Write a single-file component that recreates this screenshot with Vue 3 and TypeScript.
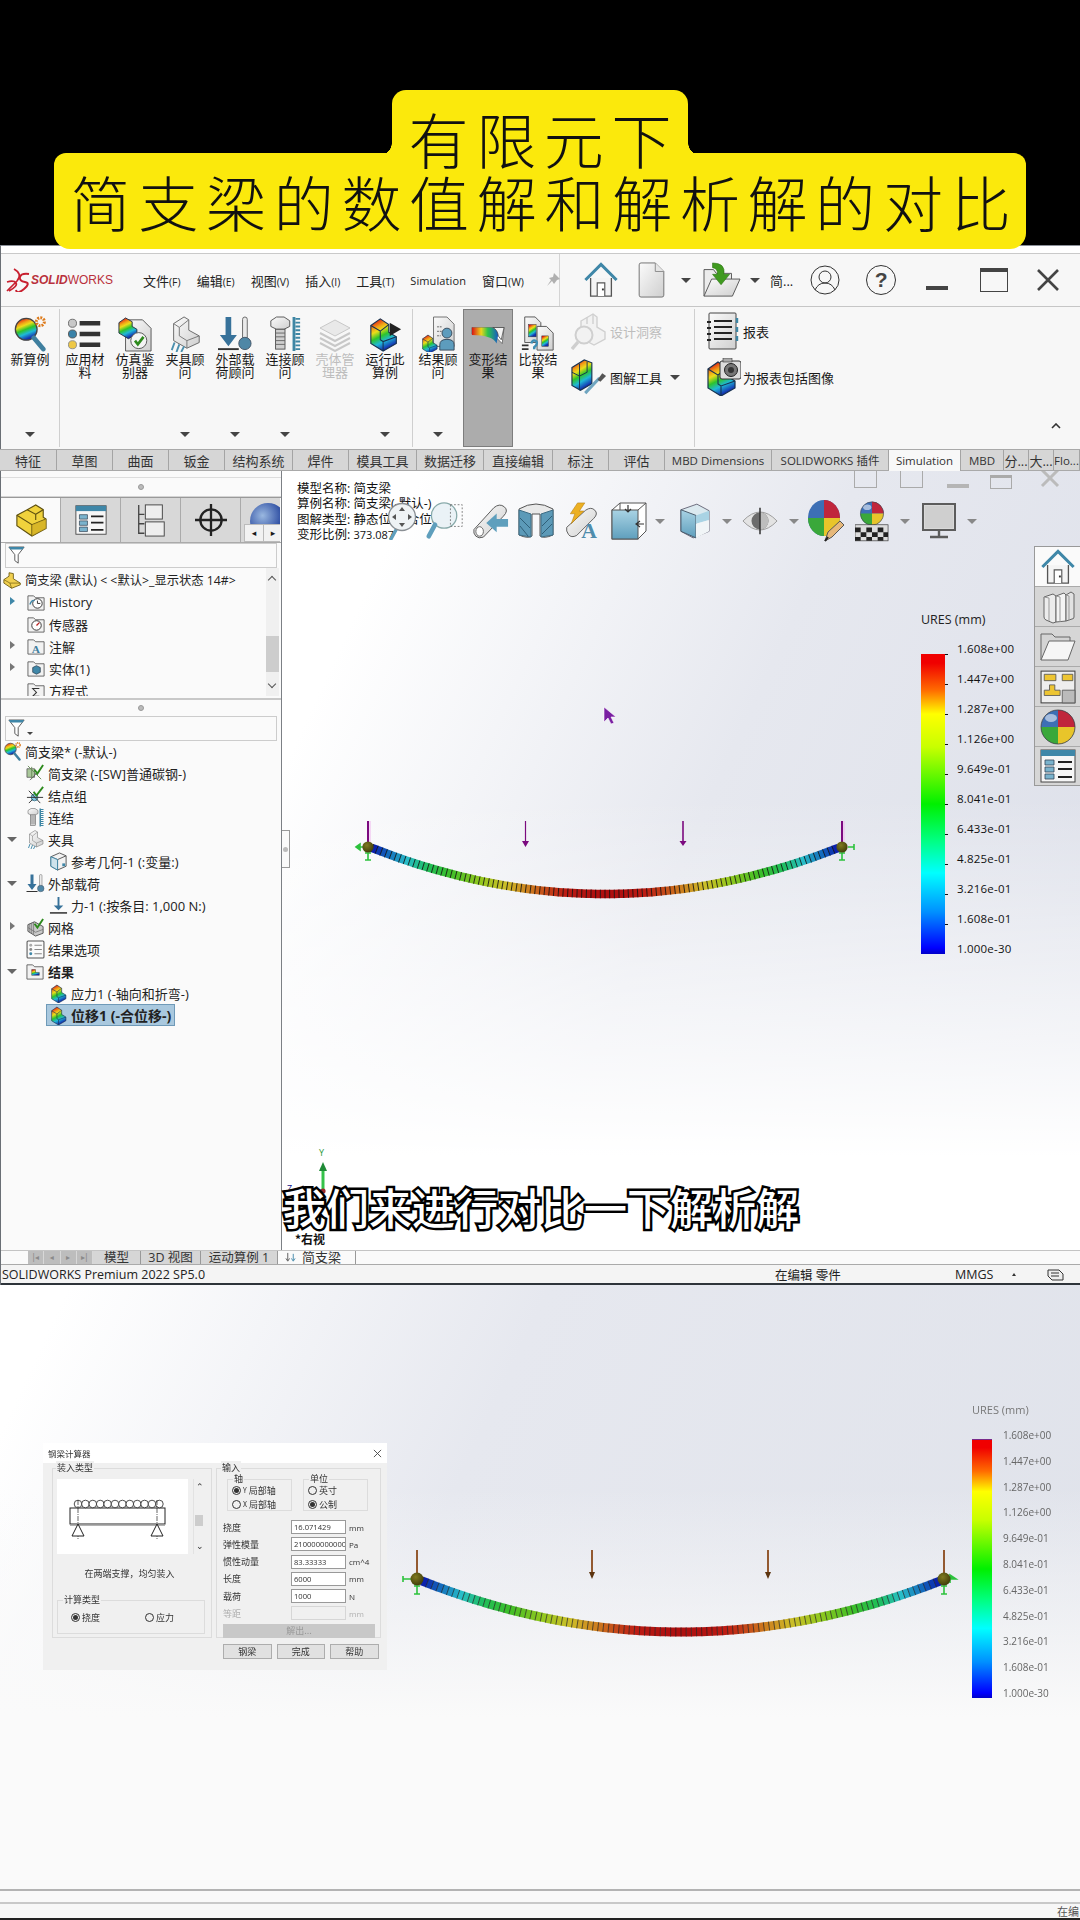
<script setup lang="ts">
interface Seg { x1: number; y1: number; x2: number; y2: number; c: string; tx1: number; ty1: number; tx2: number; ty2: number }

const stops: [number, number[]][] = [
  [0, [10, 20, 170]], [0.14, [20, 110, 190]], [0.28, [40, 190, 200]], [0.42, [30, 190, 90]],
  [0.56, [60, 190, 40]], [0.72, [150, 200, 30]], [0.82, [205, 190, 40]], [0.9, [205, 120, 30]], [0.97, [190, 30, 20]], [1, [175, 15, 15]],
]
function colour(f: number): string {
  for (let i = 1; i < stops.length; i++) {
    if (f <= stops[i][0]) {
      const [a, ca] = stops[i - 1]
      const [b, cb] = stops[i]
      const k = (f - a) / (b - a)
      return `rgb(${ca.map((v, j) => Math.round(v + (cb[j] - v) * k)).join(',')})`
    }
  }
  return 'rgb(175,15,15)'
}
function beam(x0: number, x1: number, yEnd: number, yMid: number, n: number, th: number): Seg[] {
  const out: Seg[] = []
  const px = (t: number) => x0 + (x1 - x0) * t
  const py = (t: number) => yEnd + (yMid - yEnd) * 4 * t * (1 - t)
  for (let i = 0; i < n; i++) {
    const a = i / n
    const b = (i + 1) / n
    const dx = px(b) - px(a)
    const dy = py(b) - py(a)
    const l = Math.hypot(dx, dy)
    const nx = -dy / l * th / 2
    const ny = dx / l * th / 2
    out.push({
      x1: px(a), y1: py(a), x2: px(b) + 0.3, y2: py(b), c: colour(4 * ((a + b) / 2) * (1 - (a + b) / 2)),
      tx1: px(a) - nx, ty1: py(a) - ny, tx2: px(a) + nx, ty2: py(a) + ny,
    })
  }
  return out
}
const beamA = beam(372, 838, 848, 894, 100, 8.5)
const beamB = beam(422, 940, 1581, 1632, 100, 9)

const menus = [['文件', '(F)'], ['编辑', '(E)'], ['视图', '(V)'], ['插入', '(I)'], ['工具', '(T)'], ['Simulation', ''], ['窗口', '(W)']]

interface Rb { id: string; lines: string[]; caret?: boolean; off?: boolean; on?: boolean }
const groups: { w: number; items: Rb[] }[] = [
  { w: 59, items: [{ id: 'r-new', lines: ['新算例'], caret: true }] },
  { w: 353, items: [
    { id: 'r-mat', lines: ['应用材', '料'] },
    { id: 'r-chk', lines: ['仿真鉴', '别器'] },
    { id: 'r-fix', lines: ['夹具顾', '问'], caret: true },
    { id: 'r-load', lines: ['外部载', '荷顾问'], caret: true },
    { id: 'r-bolt', lines: ['连接顾', '问'], caret: true },
    { id: 'r-shell', lines: ['壳体管', '理器'], off: true },
    { id: 'r-run', lines: ['运行此', '算例'], caret: true },
  ] },
]
const group3: Rb[] = [
  { id: 'r-adv', lines: ['结果顾', '问'], caret: true },
  { id: 'r-def', lines: ['变形结', '果'], on: true },
  { id: 'r-cmp', lines: ['比较结', '果'] },
]

const tabs: [string, number, boolean?][] = [
  ['特征', 57], ['草图', 56], ['曲面', 56], ['钣金', 56], ['结构系统', 68], ['焊件', 56], ['模具工具', 68], ['数据迁移', 67], ['直接编辑', 69],
  ['标注', 56], ['评估', 56], ['MBD Dimensions', 107], ['SOLIDWORKS 插件', 117], ['Simulation', 72, true], ['MBD', 43], ['分...', 25], ['大...', 25], ['Flo...', 26],
]
const isLatin = (s: string) => /[A-Za-z]/.test(s)

interface Row { lv: number; arrow?: 'r' | 'd' | 'b'; icon: string; text: string; bold?: boolean; sel?: boolean }
const tree1: Row[] = [
  { lv: 0, icon: 't-root', text: '简支梁 (默认) < <默认>_显示状态 14#>' },
  { lv: 1, arrow: 'b', icon: 't-hist', text: 'History' },
  { lv: 1, icon: 't-sens', text: '传感器' },
  { lv: 1, arrow: 'r', icon: 't-anno', text: '注解' },
  { lv: 1, arrow: 'r', icon: 't-body', text: '实体(1)' },
  { lv: 1, icon: 't-eq', text: '方程式' },
]
const tree2: Row[] = [
  { lv: 0, icon: 'r-new', text: '简支梁* (-默认-)' },
  { lv: 1, icon: 't-beam', text: '简支梁 (-[SW]普通碳钢-)' },
  { lv: 1, icon: 't-node', text: '结点组' },
  { lv: 1, icon: 'r-bolt', text: '连结' },
  { lv: 1, arrow: 'd', icon: 'r-fix', text: '夹具' },
  { lv: 2, icon: 't-cube', text: '参考几何-1 (:变量:)' },
  { lv: 1, arrow: 'd', icon: 'r-load', text: '外部载荷' },
  { lv: 2, icon: 't-force', text: '力-1 (:按条目: 1,000 N:)' },
  { lv: 1, arrow: 'r', icon: 't-mesh', text: '网格' },
  { lv: 1, icon: 't-opt', text: '结果选项' },
  { lv: 1, arrow: 'd', icon: 't-res', text: '结果', bold: true },
  { lv: 2, icon: 's-part', text: '应力1 (-轴向和折弯-)' },
  { lv: 2, icon: 's-part', text: '位移1 (-合位移-)', bold: true, sel: true },
]

const legend = ['1.608e+00', '1.447e+00', '1.287e+00', '1.126e+00', '9.649e-01', '8.041e-01', '6.433e-01', '4.825e-01', '3.216e-01', '1.608e-01', '1.000e-30']
const dlgRows: [string, string, string, boolean?][] = [
  ['挠度', '16.071429', 'mm'], ['弹性模量', '210000000000', 'Pa'], ['惯性动量', '83.33333', 'cm^4'],
  ['长度', '6000', 'mm'], ['载荷', '1000', 'N'], ['等距', '', 'mm', true],
]
const loops = Array.from({ length: 12 }, (_, i) => 23 + i * 7.4)
</script>

<template>
  <div class="screen">
    <svg class="defs" aria-hidden="true">
      <defs>
        <linearGradient id="rb" x1="0" y1="0" x2="0.4" y2="1">
          <stop offset=".1" stop-color="#e01515" /><stop offset=".3" stop-color="#f0a018" /><stop offset=".42" stop-color="#ecdc1a" /><stop offset=".6" stop-color="#2cc42c" /><stop offset=".78" stop-color="#1fb8d8" /><stop offset="1" stop-color="#1430b0" />
        </linearGradient>
        <linearGradient id="rh" x1="0" y1="0" x2="1" y2="0">
          <stop offset="0" stop-color="#d81414" /><stop offset=".35" stop-color="#ecd41c" /><stop offset=".6" stop-color="#2cc44c" /><stop offset="1" stop-color="#1858c8" />
        </linearGradient>
        <linearGradient id="gy" x1="0" y1="0" x2="1" y2="1">
          <stop offset="0" stop-color="#fbfbfb" /><stop offset="1" stop-color="#cfcfcf" />
        </linearGradient>
        <linearGradient id="bl" x1="0" y1="0" x2="0" y2="1">
          <stop offset="0" stop-color="#a9d3e4" /><stop offset="1" stop-color="#5f9fbd" />
        </linearGradient>
        <radialGradient id="ball" cx=".4" cy=".35" r=".7">
          <stop offset="0" stop-color="#7f7a20" /><stop offset="1" stop-color="#3d3a08" />
        </radialGradient>
        <symbol id="s-home" viewBox="0 0 36 38">
          <path d="M7 17V36H29V17" fill="#f4f4f4" stroke="#555" stroke-width="1.4" />
          <path d="M1.5 19 18 2.5 34.5 19" fill="none" stroke="#3f87a8" stroke-width="3.2" />
          <path d="M14 36V22H22V36" fill="#fff" stroke="#555" stroke-width="1.2" />
          <rect x="19" y="28" width="2" height="2" fill="#333" />
        </symbol>
        <symbol id="s-doc" viewBox="0 0 28 38">
          <path d="M1 3Q1 1 3 1H18L27 10V35Q27 37 25 37H3Q1 37 1 35Z" fill="url(#gy)" stroke="#6f6f6f" />
          <path d="M18 1V10H27" fill="#e6e6e6" stroke="#8a8a8a" />
        </symbol>
        <symbol id="s-open" viewBox="0 0 40 38">
          <path d="M1 36V8H11L14 12H30V18" fill="#ececec" stroke="#555" />
          <path d="M1 36 9 18H39L31 36Z" fill="url(#gy)" stroke="#555" />
          <path d="M10 1Q24 1 22 13H28L19 24 10 13H15Q16 7 10 6Z" fill="#3f9a1f" stroke="#2b7212" stroke-width=".6" />
        </symbol>
        <symbol id="s-part" viewBox="0 0 32 36">
          <polygon points="3,9 13,2 22,8 22,16 30,21 30,28 16,36 3,28" fill="url(#rb)" stroke="#173350" stroke-width="1.2" />
          <path d="M3 9 13 15V24L16 26 30 21M13 15 22 8M16 26V36" fill="none" stroke="#173350" stroke-width="1.1" />
        </symbol>
        <symbol id="s-sphere" viewBox="0 0 36 36">
          <circle cx="18" cy="18" r="17" fill="#3d6fb5" />
          <path d="M18 1A17 17 0 0 1 35 18H18Z" fill="#c0263c" />
          <path d="M1 18H18V35A17 17 0 0 1 1 18Z" fill="#3aa83a" />
          <path d="M18 18H35A17 17 0 0 1 18 35Z" fill="#e8c52a" />
          <ellipse cx="11" cy="9" rx="6" ry="4" fill="#fff" opacity=".55" />
          <circle cx="18" cy="18" r="17" fill="none" stroke="#444" stroke-width=".8" />
        </symbol>
        <symbol id="r-new" viewBox="0 0 36 38">
          <circle cx="14" cy="14" r="11.5" fill="url(#rb)" stroke="#444" stroke-width="1.4" />
          <path d="M22 23 32 35" stroke="#3f7f9f" stroke-width="5" stroke-linecap="round" />
          <circle cx="29" cy="6" r="4.2" fill="none" stroke="#dd7a1a" stroke-width="3.2" stroke-dasharray="2 1.2" />
        </symbol>
        <symbol id="r-mat" viewBox="0 0 38 36">
          <circle cx="5" cy="6" r="4.5" fill="#c8c8c8" stroke="#666" /><circle cx="5" cy="18" r="4.5" fill="#3a82a8" stroke="#555" /><circle cx="5" cy="30" r="4.5" fill="#eec846" stroke="#888" />
          <path d="M13 6H36M13 18H36M13 30H36" stroke="#333" stroke-width="5" />
        </symbol>
        <symbol id="r-chk" viewBox="0 0 36 38">
          <path d="M8 4H26L35 13V37H8Z" fill="url(#gy)" stroke="#555" />
          <polygon points="1,7 8,2 15,6 15,11 20,14 20,19 11,24 1,18" fill="url(#rb)" stroke="#234" />
          <circle cx="22" cy="26" r="8.5" fill="#f4f4f4" stroke="#555" />
          <path d="M18 26 21 30 27 22" fill="none" stroke="#2d8a1d" stroke-width="2.8" />
        </symbol>
        <symbol id="r-fix" viewBox="0 0 34 38">
          <path d="M5 8 16 1 21 4V15L32 21V28L19 34 5 26Z" fill="url(#gy)" stroke="#666" />
          <path d="M5 8 11 12V21L19 26 32 21M11 12 21 4M19 26V34" fill="none" stroke="#777" />
          <path d="M3 36 6 28M8 38 11 30M13 38 16 32" stroke="#4a8fae" stroke-width="2" />
        </symbol>
        <symbol id="r-load" viewBox="0 0 36 38">
          <path d="M8 1H14V20H20L11 32 2 20H8Z" fill="#37729a" />
          <rect x="0" y="34" width="22" height="2" fill="#333" />
          <rect x="26" y="1" width="5" height="24" rx="2.5" fill="#eaeaea" stroke="#666" />
          <circle cx="28.5" cy="29" r="6.5" fill="#4f87a6" stroke="#456" />
        </symbol>
        <symbol id="r-bolt" viewBox="0 0 36 38">
          <path d="M3 5 9 1H17L23 5V11L17 14H9L3 11Z" fill="url(#gy)" stroke="#555" />
          <rect x="8" y="14" width="10" height="21" fill="#cfcfcf" stroke="#555" />
          <path d="M8 18H18M8 22H18M8 26H18M8 30H18" stroke="#666" />
          <rect x="26" y="1" width="3" height="36" fill="#3e86a4" />
          <path d="M29 3H34M29 7H34M29 11H34M29 15H34M29 19H34M29 23H34M29 27H34M29 31H34M29 35H34" stroke="#3e86a4" stroke-width="2" />
        </symbol>
        <symbol id="r-shell" viewBox="0 0 34 36">
          <path d="M2 12 17 4 32 12 17 20Z" fill="#e9e9e9" stroke="#c8c8c8" />
          <path d="M2 17 17 25 32 17M2 22 17 30 32 22M2 27 17 35 32 27" fill="none" stroke="#c8c8c8" stroke-width="2" />
        </symbol>
        <symbol id="r-run" viewBox="0 0 36 38">
          <use href="#s-part" x="0" y="0" width="32" height="38" />
          <path d="M23 7 35 14 23 21Z" fill="#222" />
        </symbol>
        <symbol id="r-adv" viewBox="0 0 38 40">
          <path d="M14 1H29L37 9V34H14Z" fill="url(#gy)" stroke="#666" />
          <path d="M18 12H24M18 17H24M18 22H22" stroke="#555" stroke-dasharray="2 1" />
          <circle cx="29" cy="19" r="5.5" fill="#5d9cbd" stroke="#345" />
          <path d="M21 38V32Q21 26 29 26T37 32V38Z" fill="#5d9cbd" stroke="#345" />
          <g transform="translate(0 20) scale(.6)"><use href="#s-part" width="32" height="36" /></g>
        </symbol>
        <symbol id="r-def" viewBox="0 0 36 24">
          <path d="M1 3H23L35 3 33 20 27 14Q20 10 1 10Z" fill="#fff" stroke="#555" stroke-width=".8" />
          <path d="M1 3H21Q27 3 29 10L27 20Q23 11 1 11Z" fill="url(#rh)" />
          <path d="M23 3H35L32 16 29 12Q28 5 23 3Z" fill="#f2f2f2" stroke="#444" stroke-width=".8" />
        </symbol>
        <symbol id="r-cmp" viewBox="0 0 34 38">
          <path d="M3 1H14L20 7V28H3Z" fill="url(#gy)" stroke="#555" />
          <path d="M16 11H26L33 18V36H16Z" fill="url(#gy)" stroke="#555" />
          <rect x="7" y="9" width="8" height="13" fill="url(#rb)" stroke="#333" stroke-width=".5" />
          <rect x="21" y="21" width="7" height="11" fill="url(#rb)" stroke="#333" stroke-width=".5" />
          <path d="M0 31H7M0 35H7" stroke="#333" stroke-width="1.8" />
          <path d="M10 29Q11 25 14 26T15 31L13 33V35" fill="none" stroke="#3f8fb5" stroke-width="2.6" />
        </symbol>
        <symbol id="r-ins" viewBox="0 0 36 38">
          <path d="M10 9 22 2 26 5V15L34 20V27L23 33 10 26Z" fill="#f2f2f2" stroke="#d0d0d0" stroke-width="1.4" />
          <path d="M16 5V12M22 2V12" stroke="#d0d0d0" stroke-width="1.4" />
          <circle cx="13" cy="23" r="8.5" fill="#f2f2f2" stroke="#cfcfcf" stroke-width="2" />
          <path d="M7 30 1 37" stroke="#cfcfcf" stroke-width="3.4" />
        </symbol>
        <symbol id="r-plot" viewBox="0 0 38 38">
          <path d="M1 9 14 1 22 4V26L10 33 1 28Z" fill="url(#rb)" stroke="#173350" stroke-width="1.2" />
          <path d="M9 5V18L1 14M9 18 17 14V3M9 18V33" fill="none" stroke="#173350" />
          <path d="M15 36 30 20" stroke="#6fa5c0" stroke-width="3.2" />
          <path d="M28 22 33 15 37 18 31 24Z" fill="#555" />
        </symbol>
        <symbol id="r-note" viewBox="0 0 32 38">
          <rect x="2" y="1" width="27" height="36" rx="1" fill="url(#gy)" stroke="#444" />
          <path d="M7 9H25M7 15H25M7 21H25M7 27H25" stroke="#222" stroke-width="1.8" />
          <path d="M0 10H4M0 16H4M0 22H4M0 28H4" stroke="#222" stroke-width="2" />
          <path d="M30 6V11M30 15V20M30 24V29" stroke="#3e86a4" stroke-width="2.4" />
        </symbol>
        <symbol id="r-cam" viewBox="0 0 36 38">
          <use href="#s-part" x="0" y="2" width="32" height="36" />
          <rect x="15" y="3" width="21" height="18" rx="2" fill="#ddd" stroke="#333" />
          <rect x="18" y="0" width="9" height="4" fill="#aaa" stroke="#333" stroke-width=".6" />
          <circle cx="26" cy="12" r="6.5" fill="#777" stroke="#222" /><circle cx="26" cy="12" r="3" fill="#333" />
        </symbol>
        <symbol id="h-prev" viewBox="0 0 38 38">
          <path d="M1 28 22 5Q28 0 33 4T32 14L11 36Q6 38 3 35T1 28Z" fill="url(#gy)" stroke="#555" />
          <ellipse cx="7" cy="30" rx="4" ry="5" fill="#fff" stroke="#666" />
          <path d="M37 17H25V11L14 21 25 31V25H37Z" fill="#5f9fbd" />
        </symbol>
        <symbol id="h-sec" viewBox="0 0 36 38">
          <path d="M1 7Q18 -3 35 7V33Q26 37 22 34V12H14V34Q10 37 1 33Z" fill="#e9e9e9" stroke="#555" />
          <path d="M1 8 13 12V35L1 33ZM23 12 35 8V33L23 35Z" fill="#5c9ab8" stroke="#3d6c84" />
          <path d="M2 16 12 26M2 24 10 34M24 24 34 14M24 32 34 22" stroke="#2f5f78" />
        </symbol>
        <symbol id="h-dyn" viewBox="0 0 38 42">
          <path d="M1 28 22 9Q28 5 32 9T31 18L12 37Q6 40 3 36T1 28Z" fill="url(#gy)" stroke="#555" />
          <path d="M13 1H21L15 10H20L6 24 10 13H5Z" fill="#ecb023" stroke="#b07a10" stroke-width=".6" />
          <text x="17" y="40" font-family="Liberation Serif, serif" font-size="24" font-weight="700" fill="#4f8cac">A</text>
        </symbol>
        <symbol id="h-orient" viewBox="0 0 36 38">
          <path d="M1 8 9 1H35V29L27 37H1Z" fill="#fff" stroke="#555" />
          <rect x="1" y="8" width="26" height="29" fill="url(#bl)" stroke="#555" />
          <path d="M9 1V8M27 8 35 1" stroke="#555" />
          <path d="M17 3V9M14 7 17 10 20 7M33 22H26M29 19 25 22 29 25" fill="none" stroke="#333" stroke-width="1.2" />
        </symbol>
        <symbol id="h-disp" viewBox="0 0 32 38">
          <path d="M1 7 18 1 31 8V30L14 37 1 30Z" fill="#dbe9ef" stroke="#667" />
          <path d="M1 7 17 13V37L1 30Z" fill="url(#bl)" stroke="#456" />
          <path d="M17 13 31 8V18L17 22Z" fill="#a9d3e4" />
          <path d="M17 22 31 18V30L17 37Z" fill="#f1f5f7" />
        </symbol>
        <symbol id="h-eye" viewBox="0 0 38 28">
          <path d="M1 14Q19 -5 37 14 19 33 1 14Z" fill="#e3e3e3" stroke="#999" />
          <circle cx="19" cy="14" r="9" fill="#6c6c6c" />
          <path d="M19 5A9 9 0 0 1 19 23Z" fill="#bdbdbd" />
          <path d="M19 0V28" stroke="#333" stroke-width="1.6" />
        </symbol>
        <symbol id="h-pal" viewBox="0 0 38 44">
          <ellipse cx="17" cy="19" rx="16" ry="18" fill="#3d6fb5" />
          <path d="M17 1A16 18 0 0 1 33 19H17Z" fill="#c0263c" /><path d="M1 19H17V37A16 18 0 0 1 1 19Z" fill="#3aa83a" /><path d="M17 19H33A16 18 0 0 1 17 37Z" fill="#e8c52a" />
          <path d="M18 42 21 33 33 22 37 26 25 38Z" fill="#e6b87a" stroke="#555" />
          <path d="M18 42 21 38" stroke="#222" stroke-width="2" />
        </symbol>
        <symbol id="h-scene" viewBox="0 0 36 44">
          <use href="#s-sphere" x="5" y="0" width="26" height="28" />
          <rect x="0" y="26" width="35" height="17" fill="#ddd" stroke="#333" stroke-width=".7" />
          <path d="M0 29H6V34H0ZM12 29H18V34H12ZM24 29H30V34H24ZM6 34H12V39H6ZM18 34H24V39H18ZM30 34H35V39H30ZM0 39H6V43H0ZM12 39H18V43H12ZM24 39H30V43H24Z" fill="#222" />
        </symbol>
        <symbol id="h-mon" viewBox="0 0 34 36">
          <rect x="1" y="1" width="32" height="26" fill="#d9d9d9" stroke="#5c5c5c" stroke-width="2" />
          <rect x="3" y="3" width="28" height="22" fill="#cfcfcf" />
          <path d="M17 27V33M8 34H26" stroke="#5c5c5c" stroke-width="2.4" />
        </symbol>
        <symbol id="p-books" viewBox="0 0 34 36">
          <path d="M3 8 12 5 15 7V33L12 34 5 31Q3 30 3 28Z" fill="#ececec" stroke="#666" />
          <path d="M15 7 23 4 25 6V32L15 33Z" fill="#f4f4f4" stroke="#666" />
          <path d="M25 6 30 3 33 5V28Q33 30 31 30L25 32Z" fill="#e2e2e2" stroke="#666" />
          <path d="M3 8 8 9V32M15 7 19 8V33M25 6 28 7V31" fill="none" stroke="#999" />
        </symbol>
        <symbol id="p-folder" viewBox="0 0 36 30">
          <path d="M1 28V2H12L15 5H30V10" fill="#d4d4d4" stroke="#666" />
          <path d="M1 28 9 9H35L28 28Z" fill="#f6f6f6" stroke="#666" />
        </symbol>
        <symbol id="p-tasks" viewBox="0 0 34 32">
          <rect x="1" y="1" width="32" height="30" fill="#eee" stroke="#444" />
          <path d="M4 4H15V10H4ZM21 4H31V10H21ZM9 14H14V19H19V24H4V19H9Z" fill="#edc532" stroke="#555" stroke-width=".8" />
          <path d="M21 19H33V31H21Z" fill="#bbb" stroke="#555" stroke-width=".8" />
        </symbol>
        <symbol id="p-list" viewBox="0 0 36 34">
          <rect x="1" y="1" width="34" height="32" fill="#f6f6f6" stroke="#444" />
          <rect x="1" y="1" width="34" height="6" fill="#3f87a8" />
          <path d="M5 11H14V16H5ZM5 18H14V23H5ZM5 25H14V30H5Z" fill="#7ab3cd" stroke="#345" stroke-width=".8" />
          <path d="M18 13H32M18 20H32M18 28H32" stroke="#222" stroke-width="2" />
        </symbol>
        <symbol id="t-part" viewBox="0 0 34 36">
          <path d="M2 13 13 7 22 2 30 7V15L33 17V27L18 35 2 24Z" fill="#f0d23c" stroke="#5e5010" stroke-width="1.2" />
          <path d="M2 13 18 23 33 17M18 23V35M13 7 22 12V18M22 12 30 7" fill="none" stroke="#5e5010" stroke-width="1.2" />
          <path d="M18 23 33 17V27L18 35Z" fill="#cda91f" opacity=".7" />
        </symbol>
        <symbol id="t-fold" viewBox="0 0 20 20">
          <path d="M1 18V3H7L9 5H18V18Z" fill="#f2f2f2" stroke="#555" stroke-width=".9" />
        </symbol>
        <symbol id="t-root" viewBox="0 0 22 20">
          <path d="M1 9 7 5V1L12 2V8L20 13V15L10 19 1 13Z" fill="#f1d050" stroke="#6c5a10" />
          <path d="M1 9 8 13 20 13M8 13 10 19" fill="none" stroke="#6c5a10" stroke-width=".8" />
        </symbol>
        <symbol id="t-hist" viewBox="0 0 20 20">
          <use href="#t-fold" width="20" height="20" /><circle cx="11" cy="11" r="5" fill="#fff" stroke="#333" /><path d="M11 8V11H14" fill="none" stroke="#333" /><path d="M3 12Q5 7 8 8" fill="none" stroke="#3f87a8" stroke-width="1.4" />
        </symbol>
        <symbol id="t-sens" viewBox="0 0 20 20">
          <use href="#t-fold" width="20" height="20" /><circle cx="10" cy="11" r="5" fill="#fff" stroke="#333" /><path d="M10 11 13 8" stroke="#b22" stroke-width="1.4" />
        </symbol>
        <symbol id="t-anno" viewBox="0 0 20 20">
          <use href="#t-fold" width="20" height="20" /><text x="5" y="16.5" font-family="Liberation Serif, serif" font-size="12" font-weight="700" fill="#3f7f9f">A</text>
        </symbol>
        <symbol id="t-body" viewBox="0 0 20 20">
          <use href="#t-fold" width="20" height="20" /><path d="M6 9 10 7 14 9V14L10 16 6 14Z" fill="#3f87a8" stroke="#234" stroke-width=".7" />
        </symbol>
        <symbol id="t-eq" viewBox="0 0 20 20">
          <use href="#t-fold" width="20" height="20" /><path d="M13 8H6L10 12 6 16H13" fill="none" stroke="#333" stroke-width="1.1" />
        </symbol>
        <symbol id="t-beam" viewBox="0 0 20 20">
          <path d="M1 5H9V14H1ZM4 17 13 8" fill="#a9c79a" stroke="#555" stroke-width=".8" />
          <path d="M2 2 16 16M6 3V16" stroke="#6b8d5c" />
          <path d="M9 6 12 10 18 1" fill="none" stroke="#2d8a1d" stroke-width="2" />
        </symbol>
        <symbol id="t-node" viewBox="0 0 20 20">
          <circle cx="9" cy="12" r="3.6" fill="#7fc7e2" stroke="#4a7d92" /><path d="M1 12H18M3 5 15 18M3 18 7 14" stroke="#333" />
          <path d="M8 6 11 10 18 1" fill="none" stroke="#2d8a1d" stroke-width="2" />
        </symbol>
        <symbol id="t-cube" viewBox="0 0 18 20">
          <path d="M1 5 10 1 17 4V15L8 19 1 15Z" fill="#f3f3f3" stroke="#555" /><path d="M1 5 8 8 17 4M8 8V19" fill="none" stroke="#555" /><path d="M1 5 8 8V19L1 15Z" fill="#cfe3ec" stroke="#3f87a8" /><rect x="13" y="12" width="3" height="3" fill="#3f87a8" />
        </symbol>
        <symbol id="t-force" viewBox="0 0 18 20">
          <path d="M8 1H10V10H14L9 15 4 10H8Z" fill="#37729a" /><rect x="0" y="17" width="18" height="1.6" fill="#333" />
        </symbol>
        <symbol id="t-mesh" viewBox="0 0 20 20">
          <path d="M2 7 9 4 18 9V16L10 19 2 14Z" fill="#c9c9c9" stroke="#555" />
          <path d="M4 6V15M6 5V16M8 4V17M2 10 10 15 18 12" fill="none" stroke="#666" stroke-width=".7" />
          <path d="M9 6 12 10 18 1" fill="none" stroke="#2d8a1d" stroke-width="2" />
        </symbol>
        <symbol id="t-opt" viewBox="0 0 18 18">
          <rect x="1" y="1" width="16" height="16" rx="1" fill="#fafafa" stroke="#555" />
          <circle cx="4.5" cy="5" r="1.4" fill="#aaa" /><circle cx="4.5" cy="9" r="1.4" fill="#888" /><circle cx="4.5" cy="13" r="1.4" fill="#3f87a8" />
          <path d="M8 5H15M8 9H15M8 13H15" stroke="#888" />
        </symbol>
        <symbol id="t-res" viewBox="0 0 20 20">
          <use href="#t-fold" width="20" height="20" /><path d="M6 14V8H10V11H14V14Z" fill="url(#rb)" stroke="#333" stroke-width=".5" />
        </symbol>
      </defs>
    </svg>

    <header class="head"></header>

    <div class="title">
      <div class="title-a">有限元下</div>
      <div class="title-b">简支梁的数值解和解析解的对比</div>
    </div>

    <section class="win">
      <div class="menubar">
        <div class="logo">
          <svg class="logo-ds" viewBox="0 0 24 24"><path d="M1 23 11 13Q17 6 8 1M1 14Q8 12 10 15T3 23" fill="none" stroke="#c8202f" stroke-width="1.7" /><path d="M23 6Q15 5 14 9T19 14 18 21 10 22" fill="none" stroke="#c8202f" stroke-width="1.9" /></svg>
          <span class="logo-t"><b>SOLID</b>WORKS</span>
        </div>
        <nav class="menus">
          <span v-for="m in menus" :key="m[0]" class="menu" :class="{ lat: !m[1] }">{{ m[0] }}<small>{{ m[1] }}</small></span>
          <svg class="pin" viewBox="0 0 14 14"><path d="M8 0 14 6 11 7 8 11 6 8 1 13 5 7 3 5 7 4Z" fill="#b0b0b0" /></svg>
        </nav>
        <div class="quick">
          <svg class="q-home"><use href="#s-home" /></svg>
          <svg class="q-doc"><use href="#s-doc" /></svg>
          <i class="caret q-c1"></i>
          <svg class="q-open"><use href="#s-open" /></svg>
          <i class="caret q-c2"></i>
          <span class="q-name">简...</span>
          <svg class="q-user" viewBox="0 0 30 30"><circle cx="15" cy="15" r="14" fill="none" stroke="#333" /><circle cx="15" cy="12" r="6" fill="none" stroke="#333" /><path d="M5 25Q8 18 15 18T25 25" fill="none" stroke="#333" /></svg>
          <span class="q-help">?</span>
          <span class="q-min"></span>
          <span class="q-max"></span>
          <svg class="q-x" viewBox="0 0 24 24"><path d="M2 2 22 22M22 2 2 22" stroke="#444" stroke-width="2.6" /></svg>
        </div>
      </div>

      <div class="ribbon">
        <div v-for="g in groups" :key="g.w" class="grp" :style="{ width: g.w + 'px' }">
          <div v-for="it in g.items" :key="it.id" class="rb" :class="{ off: it.off }">
            <svg class="ri"><use :href="'#' + it.id" /></svg>
            <span v-for="l in it.lines" :key="l" class="rl">{{ l }}</span>
            <i v-if="it.caret" class="caret rc"></i>
          </div>
        </div>
        <div class="grp grp3">
          <div v-for="it in group3" :key="it.id" class="rb" :class="{ on: it.on }">
            <svg class="ri" :class="{ 'ri-def': it.on }"><use :href="'#' + it.id" /></svg>
            <span v-for="l in it.lines" :key="l" class="rl">{{ l }}</span>
            <i v-if="it.caret" class="caret rc"></i>
          </div>
        </div>
        <div class="grp grp4">
          <div class="ws off"><svg class="wi"><use href="#r-ins" /></svg><span>设计洞察</span></div>
          <div class="ws"><svg class="wi"><use href="#r-plot" /></svg><span>图解工具</span><i class="caret ws-c"></i></div>
        </div>
        <div class="grp5">
          <div class="ws"><svg class="wi"><use href="#r-note" /></svg><span>报表</span></div>
          <div class="ws"><svg class="wi"><use href="#r-cam" /></svg><span>为报表包括图像</span></div>
          <svg class="chev" viewBox="0 0 10 6"><path d="M1 5 5 1 9 5" fill="none" stroke="#333" stroke-width="1.6" /></svg>
        </div>
      </div>

      <div class="tabs">
        <span v-for="t in tabs" :key="t[0]" class="tab" :class="{ act: t[2], lat: isLatin(t[0]) }" :style="{ width: t[1] + 'px' }">{{ t[0] }}</span>
      </div>

      <div class="main">
        <aside class="side">
          <div class="grip top"><i></i></div>
          <div class="ptabs">
            <span class="ptab act"><svg class="pt-i"><use href="#t-part" /></svg></span>
            <span class="ptab"><svg class="pt-i"><use href="#p-list" /></svg></span>
            <span class="ptab"><svg class="pt-i" viewBox="0 0 30 36"><path d="M2 2V32H8M2 12H8M2 22H8" fill="none" stroke="#444" stroke-width="1.4" /><rect x="9" y="2" width="18" height="15" fill="#eee" stroke="#444" /><rect x="9" y="20" width="20" height="15" fill="#eee" stroke="#444" /></svg></span>
            <span class="ptab"><svg class="pt-i" viewBox="0 0 36 36"><circle cx="18" cy="18" r="12" fill="none" stroke="#222" stroke-width="2.6" /><path d="M0 18H36M18 0V36" stroke="#222" stroke-width="2.6" /></svg></span>
            <span class="ptab last">
              <span class="pball"></span>
              <span class="parrows"><em>◂</em><em>▸</em></span>
            </span>
          </div>
          <div class="filter"><svg class="fn" viewBox="0 0 20 22"><path d="M1 1H19L12 10V20L8 17V10Z" fill="#fff" stroke="#444" /><path d="M1 1H19L17 4H3Z" fill="#3f87a8" /></svg></div>
          <div class="tree1">
            <div class="tree1-list">
              <div v-for="r in tree1" :key="r.text" class="row" :class="'lv' + r.lv">
                <i v-if="r.arrow" class="arr" :class="r.arrow"></i>
                <svg class="ti"><use :href="'#' + r.icon" /></svg>
                <span class="tx">{{ r.text }}</span>
              </div>
            </div>
            <div class="vbar"><b class="up"></b><i></i><b class="dn"></b></div>
          </div>
          <div class="sep"></div>
          <div class="grip"><i></i></div>
          <div class="filter f2"><svg class="fn" viewBox="0 0 20 22"><path d="M1 1H19L12 10V20L8 17V10Z" fill="#fff" stroke="#444" /><path d="M1 1H19L17 4H3Z" fill="#3f87a8" /></svg><i class="tiny"></i></div>
          <div class="tree2">
            <div v-for="r in tree2" :key="r.text" class="row" :class="'lv' + r.lv">
              <i v-if="r.arrow" class="arr" :class="r.arrow"></i>
              <span class="cell" :class="{ sel: r.sel }">
                <svg class="ti"><use :href="'#' + r.icon" /></svg>
                <span class="tx" :class="{ bold: r.bold }">{{ r.text }}</span>
              </span>
            </div>
          </div>
        </aside>

        <div class="vp">
          <span class="side-grip"><i></i></span>
          <div class="ghost">
            <span class="g-box l"></span><span class="g-box r"></span><span class="g-min"></span><span class="g-max"></span>
            <svg class="g-x" viewBox="0 0 20 20"><path d="M2 2 18 18M18 2 2 18" stroke="#bbb" stroke-width="3" /></svg>
          </div>
          <div class="info">
            <div>模型名称: 简支梁</div>
            <div>算例名称: 简支梁(-默认-)</div>
            <div>图解类型: 静态位移 合位移</div>
            <div>变形比例: <span class="num">373.087</span></div>
          </div>
          <div class="hud">
            <svg class="h1" viewBox="0 0 30 38"><path d="M10 26 4 37" stroke="#5f9fbd" stroke-width="3.4" stroke-linecap="round" /><circle cx="15" cy="15" r="13.5" fill="#eff3f5" stroke="#8a8f94" stroke-width="1.3" /><path d="M15 5 12 9H18ZM15 25 12 21H18ZM5 15 9 12V18ZM25 15 21 12V18Z" fill="#555" /></svg>
            <svg class="h2" viewBox="0 0 40 42"><circle cx="19" cy="15" r="14" fill="#eaf2f6" stroke="#8aa" stroke-width="1.4" /><path d="M9 25 2 38" stroke="#5f9fbd" stroke-width="5" stroke-linecap="round" /><rect x="26" y="3" width="13" height="24" fill="none" stroke="#777" stroke-dasharray="2 2" /></svg>
            <svg class="h3 m8"><use href="#h-prev" /></svg>
            <svg class="h3 m9"><use href="#h-sec" /></svg>
            <svg class="h3 m11"><use href="#h-dyn" /></svg>
            <svg class="h3 m10"><use href="#h-orient" /></svg>
            <i class="hc m8"></i>
            <svg class="h4"><use href="#h-disp" /></svg>
            <i class="hc m12"></i>
            <svg class="h5"><use href="#h-eye" /></svg>
            <i class="hc m11"></i>
            <svg class="h6"><use href="#h-pal" /></svg>
            <svg class="h7"><use href="#h-scene" /></svg>
            <i class="hc m11"></i>
            <svg class="h8"><use href="#h-mon" /></svg>
            <i class="hc m11"></i>
          </div>
          <svg class="cursor" viewBox="0 0 14 20"><path d="M1 1V16L5 12 8 18 11 17 8 11H13Z" fill="#7a1fa2" stroke="#fff" stroke-width=".6" /></svg>

          <svg class="beam-a" viewBox="340 810 540 100">
            <g v-for="(s, i) in beamA" :key="i">
              <line :x1="s.x1" :y1="s.y1" :x2="s.x2" :y2="s.y2" :stroke="s.c" stroke-width="8.5" />
              <line :x1="s.tx1" :y1="s.ty1" :x2="s.tx2" :y2="s.ty2" stroke="#111" stroke-width="1" opacity=".85" />
            </g>
            <g stroke="#7b0a7f" fill="#7b0a7f">
              <path d="M368 821V842" stroke-width="2" /><path d="M525.5 821V842" stroke-width="1.2" /><path d="M683 821V842" stroke-width="1.6" /><path d="M842 821V842" stroke-width="2" />
              <path d="M522 841H529L525.5 847ZM679.5 841H686.5L683 846Z" stroke="none" />
            </g>
            <path d="M370 821V842M844 821V842" stroke="#f0b6ee" stroke-width="1" />
            <g stroke="#2cc23c" fill="none" stroke-width="1.6">
              <path d="M356 847H365M368 853V860M365 860H371M365 853H371" />
              <path d="M842 853V860M839 860H845M839 853H845M848 847H854M854 844V850" />
              <path d="M356 847 360 844V850Z" fill="#2cc23c" />
            </g>
            <circle cx="368" cy="847" r="5.6" fill="url(#ball)" /><circle cx="842" cy="847" r="5.6" fill="url(#ball)" />
          </svg>

          <div class="legend la">
            <div class="lg-t">URES (mm)</div>
            <div class="lg-b">
              <div class="lg-bar"></div>
              <div class="lg-v"><span v-for="v in legend" :key="v">{{ v }}</span></div>
            </div>
          </div>

          <div class="panel">
            <span class="pn on"><svg class="pi"><use href="#s-home" /></svg></span>
            <span class="pn"><svg class="pi"><use href="#p-books" /></svg></span>
            <span class="pn"><svg class="pi"><use href="#p-folder" /></svg></span>
            <span class="pn"><svg class="pi"><use href="#p-tasks" /></svg></span>
            <span class="pn"><svg class="pi"><use href="#s-sphere" /></svg></span>
            <span class="pn"><svg class="pi"><use href="#p-list" /></svg></span>
          </div>

          <div class="triad">
            <svg viewBox="0 0 44 50"><path d="M36 20V43" stroke="#35c24a" stroke-width="3" /><path d="M32 23 36 14 40 23Z" fill="#1f8a36" /><path d="M8 43H36" stroke="#14148c" stroke-width="3" /><circle cx="36" cy="43" r="2.6" fill="#9c2a2a" /></svg>
            <span class="ty">Y</span><span class="tz">Z</span>
          </div>
          <div class="caption">我们来进行对比一下解析解</div>
          <div class="viewname">*右视</div>
        </div>
      </div>

      <div class="btabs">
        <div class="navb"><i>|◂</i><i>◂</i><i>▸</i><i>▸|</i></div>
        <span class="bt b1">模型</span><span class="bt b2">3D 视图</span><span class="bt b3">运动算例 1</span>
        <span class="bt b4"><svg class="bi" viewBox="0 0 12 12"><path d="M3 1V9M1 7 3 10 5 7" fill="none" stroke="#555" /><path d="M9 2V9M7 7 9 10 11 7" fill="none" stroke="#3f87a8" /></svg>简支梁</span>
      </div>
      <div class="status">
        <span class="st-a">SOLIDWORKS Premium 2022 SP5.0</span>
        <span class="st-b">在编辑 零件</span>
        <span class="st-c">MMGS</span>
        <i class="st-d"></i>
        <svg class="st-e" viewBox="0 0 18 14"><path d="M1 3H12L16 7V13H5L1 9Z" fill="#eee" stroke="#333" /><path d="M4 6H12M4 9H12" stroke="#333" /></svg>
      </div>
    </section>

    <section class="second">
      <div class="dlg">
        <div class="dlg-bar"><span>钢梁计算器</span><svg class="dlg-x" viewBox="0 0 10 10"><path d="M1 1 9 9M9 1 1 9" stroke="#444" /></svg></div>
        <div class="dlg-body">
          <div class="dlg-l box">
            <span class="bt-t">装入类型</span>
            <div class="dl-top">
              <div class="diagram">
                <svg viewBox="0 0 131 75">
                  <rect x="13" y="29" width="95" height="16" fill="#fff" stroke="#222" />
                  <path d="M13 46H108" stroke="#999" stroke-width="1.4" />
                  <circle v-for="c in loops" :key="c" :cx="c - 2" cy="25" r="3.8" fill="#fff" stroke="#222" stroke-width=".8" />
                  <path d="M21 21V60M100 21V60" stroke="#222" stroke-dasharray="5 1 1 1" stroke-width=".7" />
                  <path d="M21 45 15 57H27ZM100 45 94 57H106Z" fill="#fff" stroke="#222" />
                </svg>
              </div>
              <div class="dscroll"><b>⌃</b><i></i><b>⌄</b></div>
            </div>
            <div class="cap">在两端支撑，均匀装入</div>
            <div class="calc box">
              <span class="bt-t">计算类型</span>
              <span class="rad"><i class="chk"></i>挠度</span>
              <span class="rad"><i></i>应力</span>
            </div>
          </div>
          <div class="dlg-r box">
            <span class="bt-t t-in">输入</span>
            <div class="subs">
              <div class="sub box"><span class="bt-t">轴</span><span class="rad"><i class="chk"></i><small>Y</small> 局部轴</span><span class="rad"><i></i><small>X</small> 局部轴</span></div>
              <div class="sub box"><span class="bt-t">单位</span><span class="rad"><i></i>英寸</span><span class="rad"><i class="chk"></i>公制</span></div>
            </div>
            <div class="frows">
              <div v-for="r in dlgRows" :key="r[0]" class="frow" :class="{ dis: r[3] }">
                <label>{{ r[0] }}</label><span class="inp">{{ r[1] }}</span><em>{{ r[2] }}</em>
              </div>
            </div>
            <div class="solve">解出...</div>
          </div>
        </div>
        <div class="dlg-btns"><span>钢梁</span><span>完成</span><span>帮助</span></div>
      </div>

      <svg class="beam-b" viewBox="400 1540 560 110">
        <g v-for="(s, i) in beamB" :key="i">
          <line :x1="s.x1" :y1="s.y1" :x2="s.x2" :y2="s.y2" :stroke="s.c" stroke-width="9" />
          <line :x1="s.tx1" :y1="s.ty1" :x2="s.tx2" :y2="s.ty2" stroke="#222" stroke-width="1" opacity=".7" />
        </g>
        <path d="M417 1550V1574M592 1550V1574M768 1550V1574M944 1550V1574" stroke="#8a4a1c" stroke-width="1.8" />
        <path d="M589 1572H595L592 1579ZM765 1572H771L768 1579Z" fill="#5c3410" />
        <g stroke="#2cc23c" fill="none" stroke-width="1.6">
          <path d="M403 1579H411M403 1576V1582M417 1586V1594M414 1594H420M414 1586H420" />
          <path d="M944 1586V1594M941 1594H947M941 1586H947" />
          <path d="M950 1579H956L950 1575V1583Z" fill="#2cc23c" />
        </g>
        <circle cx="417" cy="1579" r="6.5" fill="url(#ball)" /><circle cx="944" cy="1579" r="6.5" fill="url(#ball)" />
      </svg>

      <div class="legend lb">
        <div class="lg-t">URES (mm)</div>
        <div class="lg-b">
          <div class="lg-bar"></div>
          <div class="lg-v"><span v-for="v in legend" :key="v">{{ v }}</span></div>
        </div>
      </div>

      <div class="foot">
        <div class="foot-s"><span>在编</span></div>
      </div>
    </section>
  </div>
</template>

<style scoped>
.screen {
  position: relative;
  width: 1080px;
  height: 1920px;
  overflow: hidden;
  display: flex;
  flex-direction: column;
  background: #000;
  color: #1a1a1a;
  font-family: "Open Sans", "Noto Sans CJK SC", sans-serif;
  font-size: 13px;
}
.defs { position: absolute; width: 0; height: 0; }
svg { display: block; flex: none; overflow: hidden; }
i, em { font-style: normal; }
.head { height: 245px; flex: none; background: #000; }

.title {
  position: absolute;
  top: 90px;
  left: 54px;
  width: 972px;
  z-index: 5;
  display: flex;
  flex-direction: column;
  align-items: center;
  font-family: "Noto Sans CJK SC", sans-serif;
  font-size: 60px;
  font-weight: 300;
  color: #111;
  letter-spacing: 7.7px;
}
.title-a { position: relative; z-index: 1; width: 296px; height: 65px; background: #fbe90c; border-radius: 14px 14px 0 0; text-align: center; line-height: 96px; text-indent: 7.7px; white-space: nowrap; }
.title-a::before, .title-a::after { content: ""; position: absolute; bottom: 0; width: 12px; height: 12px; }
.title-a::before { right: 100%; background: radial-gradient(circle at 0 0, transparent 11.5px, #fbe90c 12px); }
.title-a::after { left: 100%; background: radial-gradient(circle at 100% 0, transparent 11.5px, #fbe90c 12px); }
.title-b { width: 972px; height: 96px; background: #fbe90c; border-radius: 12px 12px 16px 16px; margin-top: -2px; text-align: center; line-height: 96px; text-indent: 9px; white-space: nowrap; }

.win { height: 1040px; flex: none; background: #fff; display: flex; flex-direction: column; padding-top: 7px; box-sizing: border-box; border-left: 1px solid #6a6f75; border-top: 1px solid #8a8f98; position: relative; }
.menubar { height: 54px; flex: none; display: flex; align-items: center; background: #f7f7f7; border-top: 1px solid #c9c9c9; border-bottom: 1px solid #c6c6c6; box-sizing: border-box; }
.logo { width: 142px; display: flex; align-items: center; padding-left: 5px; box-sizing: border-box; flex: none; }
.logo-ds { width: 24px; height: 24px; }
.logo-t { margin-left: 1px; font-family: "Liberation Sans", sans-serif; font-size: 12px; color: #b9303c; letter-spacing: 0; }
.logo-t b { font-weight: 700; font-style: italic; }
.menus { display: flex; align-items: center; gap: 16px; width: 417px; flex: none; border-right: 1px solid #d4d4d4; height: 100%; box-sizing: border-box; position: relative; }
.menu { font-size: 13px; color: #222; white-space: nowrap; }
.menu.lat { font-size: 11px; letter-spacing: .1px; }
.menu small { font-size: 10.5px; }
.pin { width: 14px; height: 14px; margin-left: 6px; }
.quick { flex: 1; display: flex; align-items: center; height: 100%; position: relative; }
.q-home { width: 34px; height: 36px; margin-left: 24px; }
.q-doc { width: 27px; height: 36px; margin-left: 20px; }
.caret { display: block; width: 0; height: 0; border-left: 5px solid transparent; border-right: 5px solid transparent; border-top: 5px solid #444; flex: none; }
.q-c1 { margin-left: 16px; }
.q-open { width: 38px; height: 36px; margin-left: 12px; }
.q-c2 { margin-left: 9px; }
.q-name { margin-left: 10px; font-size: 13px; }
.q-user { width: 30px; height: 30px; margin-left: 17px; }
.q-help { width: 28px; height: 28px; border: 1px solid #333; border-radius: 50%; margin-left: 26px; text-align: center; line-height: 28px; font-size: 21px; font-weight: 600; color: #444; font-family: "Liberation Sans", sans-serif; flex: none; }
.q-min { width: 22px; height: 4px; background: #444; margin: 16px 0 0 30px; flex: none; }
.q-max { width: 28px; height: 24px; border: 1px solid #444; border-top-width: 4px; box-sizing: border-box; margin-left: 32px; flex: none; }
.q-x { width: 24px; height: 24px; margin-left: 28px; }

.ribbon { height: 142px; flex: none; display: flex; background: #f7f7f7; box-sizing: border-box; padding-bottom: 2px; }
.grp { display: flex; height: 138px; margin-top: 2px; border-right: 1px solid #cfcfcf; box-sizing: border-box; justify-content: flex-start; padding-left: 4px; }
.grp + .grp { padding-left: 0; }
.rb { width: 50px; display: flex; flex-direction: column; align-items: center; padding-top: 7px; box-sizing: border-box; flex: none; font-size: 13px; line-height: 13px; height: 100%; position: relative; }
.ri { width: 34px; height: 36px; margin-bottom: 1px; }
.rl { white-space: nowrap; color: #1a1a1a; }
.off .rl, .off span { color: #bdbdbd; }
.rb .rc { position: absolute; bottom: 10px; }
.grp3 { width: 152px; flex: none; padding-left: 0; border-right: none; }
.rb.on { background: #acacac; box-shadow: inset 0 0 0 1px #7d7d7d; }
.ri-def { height: 24px; margin: 8px 0 5px; }
.grp4 { width: 130px; flex: none; flex-direction: column; padding-top: 3px; gap: 8px; padding-left: 0 !important; }
.ws { display: flex; align-items: center; height: 38px; font-size: 13px; white-space: nowrap; }
.wi { width: 36px; height: 38px; margin-right: 3px; }
.grp4 .ws { padding-left: 6px; }
.ws-c { margin-left: 8px; }
.grp5 { flex: 1; position: relative; display: flex; flex-direction: column; gap: 8px; margin-top: 2px; padding: 3px 0 0 10px; box-sizing: border-box; }
.grp5 .wi { margin-right: 2px; }
.chev { position: absolute; right: 19px; bottom: 18px; width: 10px; height: 6px; }

.tabs { height: 22px; flex: none; display: flex; background: #d6d6d6; border-top: 1px solid #a9a9a9; border-bottom: 1px solid #a9a9a9; box-sizing: border-box; margin-left: -1px; }
.tab { display: flex; align-items: center; justify-content: center; box-sizing: border-box; border-right: 1px solid #a4a4a4; font-size: 13px; color: #333; white-space: nowrap; flex: none; overflow: hidden; }
.tab.lat { font-size: 11.5px; }
.tab.act { background: #f8f8f8; margin-bottom: -1px; }

.main { flex: 1; display: flex; min-height: 0; }
.side { width: 281px; flex: none; background: #fafafa; border-right: 1px solid #7c8085; box-sizing: border-box; display: flex; flex-direction: column; }
.grip { height: 16px; flex: none; display: flex; align-items: center; justify-content: center; }
.grip i { width: 6px; height: 6px; border-radius: 50%; background: #bbb; border: 1px solid #999; box-sizing: border-box; }
.grip.top { box-sizing: border-box; border-top: 1px solid #ddd; margin-top: 6px; height: 20px; border-bottom: 1px solid #d4d4d4; }
.ptabs { display: flex; height: 46px; flex: none; border-top: 1px solid #999; border-bottom: 1px solid #aaa; box-sizing: border-box; }
.ptab { width: 60px; display: flex; align-items: center; justify-content: center; background: #d8d8d8; border-right: 1px solid #aaa; box-sizing: border-box; flex: none; }
.ptab.act { background: #fafafa; }
.pt-i { width: 32px; height: 34px; }
.ptab.last { width: 39px; position: relative; overflow: hidden; border-right: none; align-items: flex-start; }
.pball { width: 36px; height: 36px; border-radius: 50%; background: radial-gradient(circle at 35% 35%, #9ab8e0, #2a4aa0 60%); margin: 5px 0 0 14px; flex: none; box-shadow: 10px 0 0 -4px #c0263c; }
.parrows { position: absolute; left: 3px; bottom: 0; display: flex; background: #f2f2f2; border: 1px solid #bbb; height: 18px; box-sizing: border-box; }
.parrows em { width: 18px; font-size: 9px; line-height: 16px; text-align: center; border-right: 1px solid #bbb; font-family: "DejaVu Sans", sans-serif; }
.filter { margin: 0 4px; height: 25px; flex: none; border: 1px solid #ccc; box-sizing: border-box; background: #fafafa; display: flex; align-items: center; }
.fn { width: 17px; height: 19px; margin-left: 2px; }
.tiny { width: 0; height: 0; border-left: 3px solid transparent; border-right: 3px solid transparent; border-top: 3px solid #444; margin: 10px 0 0 2px; }
.tree1 { height: 128px; flex: none; overflow: hidden; display: flex; position: relative; }
.tree1-list { flex: 1; padding-top: 1px; min-width: 0; }
.tree1 .row.lv0 { font-size: 12.3px; }
.vbar { width: 13px; background: #f0f0f0; margin-right: 2px; display: flex; flex-direction: column; position: relative; flex: none; }
.vbar i { position: absolute; top: 68px; left: 0; width: 13px; height: 36px; background: #cdcdcd; }
.vbar b { position: absolute; left: 3px; width: 5px; height: 5px; border-left: 1.5px solid #555; border-top: 1.5px solid #555; }
.vbar .up { top: 9px; transform: rotate(45deg); }
.vbar .dn { bottom: 9px; transform: rotate(225deg); }
.row { height: 22px; display: flex; align-items: center; position: relative; white-space: nowrap; font-size: 13px; color: #222; box-sizing: border-box; }
.row.lv0 { padding-left: 2px; }
.row.lv1 { padding-left: 26px; }
.row.lv2 { padding-left: 48px; }
.tree2 { margin-top: -1px; }
.tree2 .row.lv1 { padding-left: 25px; }
.arr { position: absolute; left: 9px; top: 6px; width: 0; height: 0; }
.arr.r, .arr.b { top: 6px; border-top: 4px solid transparent; border-bottom: 4px solid transparent; border-left: 5px solid #777; }
.arr.b { border-left-color: #3f87a8; }
.arr.d { left: 6px; top: 9px; border-left: 5px solid transparent; border-right: 5px solid transparent; border-top: 5px solid #666; }
.cell { display: flex; align-items: center; height: 22px; }
.ti { width: 19px; height: 19px; margin-right: 3px; }
.tx.bold { font-weight: 700; }
.cell.sel { background: #a9c8de; box-shadow: inset 0 0 0 1px #6f9ab8; padding: 0 4px 0 3px; margin-left: -3px; }
.cell.sel .tx { font-size: 14px; }
.sep { height: 2px; background: #c8c8c8; flex: none; margin-top: 2px; }
.f2 { margin-top: 0; width: 272px; }

.vp { flex: 1; position: relative; overflow: visible; background: linear-gradient(to bottom, rgba(255,255,255,0) 42%, #fff 88%), linear-gradient(115deg, #fff 12%, #e6e8ef 50%, #dcdfe9 100%); }
.side-grip { position: absolute; left: 0; top: 359px; width: 8px; height: 38px; background: #fafafa; border: 1px solid #999; border-left: none; box-sizing: border-box; display: flex; align-items: center; justify-content: center; z-index: 2; }
.side-grip i { width: 5px; height: 5px; border-radius: 50%; background: #bbb; }
.ghost { position: absolute; left: 0; right: 0; top: 0; height: 18px; overflow: hidden; }
.g-box { position: absolute; top: -4px; width: 23px; height: 21px; border: 1px solid #aaa; box-sizing: border-box; }
.g-box.l { left: 572px; } .g-box.r { left: 618px; }
.g-min { position: absolute; left: 665px; top: 13px; width: 22px; height: 4px; background: #b5b5b5; }
.g-max { position: absolute; left: 708px; top: 4px; width: 22px; height: 14px; border: 1px solid #aaa; border-top-width: 3px; box-sizing: border-box; }
.g-x { position: absolute; left: 758px; top: -3px; width: 20px; height: 20px; }
.info { position: absolute; left: 15px; top: 10px; font-size: 12.5px; line-height: 15.3px; color: #111; white-space: nowrap; }
.num { font-size: 11px; }
.hud { position: absolute; left: 105px; top: 28px; display: flex; align-items: center; height: 44px; }
.hud svg { height: 38px; }
.h1 { width: 30px; }
.h2 { width: 40px; margin-left: 8px; }
.h3 { width: 36px; }
.m8 { margin-left: 8px; } .m9 { margin-left: 9px; } .m10 { margin-left: 10px; } .m11 { margin-left: 11px; } .m12 { margin-left: 12px; }
.hc { width: 0; height: 0; border-left: 5px solid transparent; border-right: 5px solid transparent; border-top: 5px solid #888; flex: none; }
.h4 { width: 30px; margin-left: 15px; }
.hud .h5 { width: 36px; height: 28px; margin-left: 10px; }
.hud .h6 { width: 38px; height: 44px; margin-left: 8px; }
.hud .h7 { width: 34px; height: 42px; margin-left: 10px; }
.hud .h8 { width: 34px; height: 36px; margin-left: 12px; }
.cursor { position: absolute; left: 321px; top: 235px; width: 14px; height: 20px; }
.beam-a { position: absolute; left: 58px; top: 339px; width: 540px; height: 100px; }

.legend { position: absolute; white-space: nowrap; }
.la { left: 639px; top: 139px; }
.lg-b { display: flex; position: relative; }
.lg-bar { background: linear-gradient(to bottom, #f00000 0, #f00000 3%, #ff6a00 12%, #ffff00 20%, #c8ff00 31%, #00f000 50%, #00ff80 62%, #00ffff 73%, #0090ff 86%, #0000ff 98%, #0000c8 100%); position: relative; flex: none; }
.lg-bar::after { content: ""; position: absolute; top: 0; bottom: 0; left: 100%; width: 3px; background: repeating-linear-gradient(to bottom, #111 0 1px, transparent 1px 30px); }
.la .lg-t { font-size: 12.5px; height: 44px; line-height: 20px; color: #222; }
.la .lg-bar { width: 24px; height: 300px; }
.la .lg-v { margin: -20px 0 0 12px; display: flex; flex-direction: column; }
.la .lg-v span { height: 30px; line-height: 30px; font-size: 11.5px; letter-spacing: .2px; color: #111; }

.panel { position: absolute; right: 0; top: 75px; width: 46px; display: flex; flex-direction: column; border: 1px solid #999; border-right: none; box-sizing: border-box; background: #d6d6d6; }
.pn { height: 40px; display: flex; align-items: center; justify-content: center; border-bottom: 1px solid #aaa; box-sizing: border-box; }
.pn:last-child { border-bottom: none; height: 38px; }
.pn.on { background: #fafafa; }
.pi { width: 36px; height: 36px; }

.triad { position: absolute; left: 5px; top: 677px; width: 44px; height: 50px; }
.triad svg { width: 44px; height: 50px; }
.ty { position: absolute; left: 32px; top: -2px; font-size: 9px; color: #2a9a3a; }
.tz { position: absolute; left: 0; top: 34px; font-size: 9px; color: #14148c; }
.caption { position: absolute; left: 1px; top: 710px; font-family: "Noto Sans CJK SC", sans-serif; font-size: 43px; line-height: 50px; font-weight: 500; color: #fff; -webkit-text-stroke: 5px #000; paint-order: stroke fill; white-space: nowrap; z-index: 3; }
.viewname { position: absolute; left: 13px; top: 759px; font-size: 12px; font-weight: 700; line-height: 18px; color: #111; font-family: "Noto Sans CJK SC", sans-serif; z-index: 4; }

.btabs { height: 15px; flex: none; display: flex; background: #fafafa; border-bottom: 1px solid #aaa; border-top: 1px solid #c4c4c4; box-sizing: border-box; padding-left: 27px; align-items: stretch; font-size: 12.5px; line-height: 13px; }
.navb { width: 65px; display: flex; background: #bdbdbd; flex: none; }
.navb i { flex: 1; font-size: 8px; text-align: center; color: #8a8a8a; border-right: 1px solid #d8d8d8; font-family: "DejaVu Sans", sans-serif; }
.bt { background: #d6d6d6; border-right: 1px solid #999; text-align: center; box-sizing: border-box; flex: none; white-space: nowrap; color: #333; }
.b1 { width: 48px; } .b2 { width: 60px; } .b3 { width: 77px; }
.b4 { width: 78px; background: #fafafa; display: flex; align-items: center; justify-content: flex-start; gap: 6px; padding-left: 7px; font-size: 13px; }
.bi { width: 11px; height: 11px; }
.status { height: 20px; flex: none; display: flex; align-items: center; background: #f4f4f4; border-bottom: 2px solid #2e343a; box-sizing: border-box; position: relative; font-size: 12.5px; color: #222; }
.st-a { margin-left: 1px; width: 773px; }
.st-b { width: 180px; flex: none; }
.st-c { width: 57px; flex: none; }
.st-d { width: 0; height: 0; border-left: 2.5px solid transparent; border-right: 2.5px solid transparent; border-bottom: 3px solid #333; margin-right: 31px; flex: none; }
.st-e { width: 18px; height: 14px; }

.second { flex: 1; position: relative; display: flex; flex-direction: column; background: linear-gradient(to bottom, rgba(255,255,255,0) 32%, #fafafa 68%), linear-gradient(115deg, #fff 5%, #e6e8ef 40%, #dfe2ea 100%); }
.dlg { position: absolute; left: 43px; top: 158px; width: 344px; height: 227px; background: #f0f0f0; filter: blur(.5px); font-size: 9px; color: #333; display: flex; flex-direction: column; font-family: "Noto Sans CJK SC", sans-serif; }
.dlg-bar { height: 20px; flex: none; background: #fff; display: flex; align-items: center; justify-content: space-between; padding: 0 5px; font-size: 8.5px; }
.dlg-x { width: 9px; height: 9px; }
.dlg-body { display: flex; gap: 4px; padding: 5px 6px 0 9px; height: 175px; flex: none; box-sizing: border-box; }
.box { position: relative; border: 1px solid #dcdcdc; box-sizing: border-box; }
.bt-t { position: absolute; top: -8px; left: 3px; background: #f0f0f0; padding: 0 1px; font-size: 9px; line-height: 13px; }
.t-in { left: 4px; }
.dlg-l { width: 160px; height: 170px; padding: 10px 4px 0 4px; }
.dl-top { display: flex; gap: 5px; }
.diagram { width: 131px; height: 75px; background: #fff; }
.diagram svg { width: 131px; height: 75px; }
.dscroll { width: 13px; position: relative; border-left: 1px solid #e2e2e2; height: 75px; }
.dscroll i { position: absolute; left: 1px; top: 36px; width: 8px; height: 11px; background: #cdcdcd; }
.dscroll b { position: absolute; left: 2px; font-weight: 400; font-size: 9px; line-height: 9px; font-family: "DejaVu Sans", sans-serif; }
.dscroll b:first-child { top: 4px; } .dscroll b:last-child { bottom: 3px; }
.cap { text-align: center; margin-top: 13px; font-size: 9px; line-height: 14px; padding-right: 5px; }
.calc { margin: 19px 0 0 0; width: 148px; height: 34px; display: flex; align-items: center; padding-left: 13px; gap: 45px; }
.calc .bt-t { left: 5px; }
.rad { display: flex; align-items: center; gap: 2px; font-size: 9px; line-height: 13px; white-space: nowrap; }
.rad i { width: 9px; height: 9px; border: 1px solid #333; border-radius: 50%; box-sizing: border-box; display: block; flex: none; position: relative; }
.rad i.chk::after { content: ""; position: absolute; inset: 1px; background: #333; border-radius: 50%; }
.rad small { font-size: 7px; }
.dlg-r { width: 165px; height: 170px; padding: 10px 5px 0 6px; }
.subs { display: flex; gap: 11px; margin-left: 4px; }
.sub { width: 65px; height: 32px; padding: 4px 0 0 4px; display: flex; flex-direction: column; gap: 1px; }
.sub .bt-t { left: 5px; }
.frows { margin-top: 9px; display: flex; flex-direction: column; gap: 3.3px; }
.frow { display: flex; align-items: center; height: 14px; }
.frow label { width: 68px; font-size: 9px; flex: none; }
.inp { width: 55px; height: 14px; background: #fff; border: 1px solid #999; box-sizing: border-box; font-family: "Open Sans", sans-serif; font-size: 7.6px; line-height: 12px; padding-left: 2px; flex: none; overflow: hidden; }
.frow em { margin-left: 3px; font-size: 8px; font-family: "Open Sans", sans-serif; }
.dis { color: #b0b0b0; }
.dis .inp { background: #f0f0f0; border-color: #d6d6d6; }
.solve { margin: 4px 0 0 0; width: 152px; height: 14px; background: #c8c8c8; text-align: center; line-height: 14px; font-size: 9px; color: #999; }
.dlg-btns { display: flex; gap: 5px; margin: 6px 0 0 180px; }
.dlg-btns span { width: 48.5px; height: 15px; background: #e1e1e1; border: 1px solid #adadad; box-sizing: border-box; text-align: center; line-height: 13px; font-size: 9px; }

.beam-b { position: absolute; left: 400px; top: 255px; width: 560px; height: 110px; filter: blur(.35px); }
.lb { left: 972px; top: 115px; filter: blur(.3px); }
.lb .lg-t { font-size: 11px; height: 39px; line-height: 20px; color: #777; }
.lb .lg-bar { width: 20px; height: 259px; border-top: 1px solid #7a2a8a; box-sizing: border-box; }
.lb .lg-bar::after { display: none; }
.lb .lg-v { margin: -16px 0 0 11px; display: flex; flex-direction: column; }
.lb .lg-v span { height: 25.8px; line-height: 25.8px; font-size: 10px; color: #666; }

.foot { margin-top: auto; height: 31px; flex: none; border-top: 2px solid #b3b3b3; box-sizing: border-box; background: #f9f9f9; padding-top: 11px; }
.foot-s { height: 18px; border-top: 2px solid #c8c8c8; box-sizing: border-box; display: flex; justify-content: flex-end; align-items: flex-end; font-size: 11px; color: #555; overflow: hidden; background: #f7f7f7; border-bottom: 2px solid #222; position: relative; }
.foot-s span { width: 23px; overflow: hidden; white-space: nowrap; line-height: 13px; }
</style>
<style>
html, body { margin: 0; background: #000; }
</style>
